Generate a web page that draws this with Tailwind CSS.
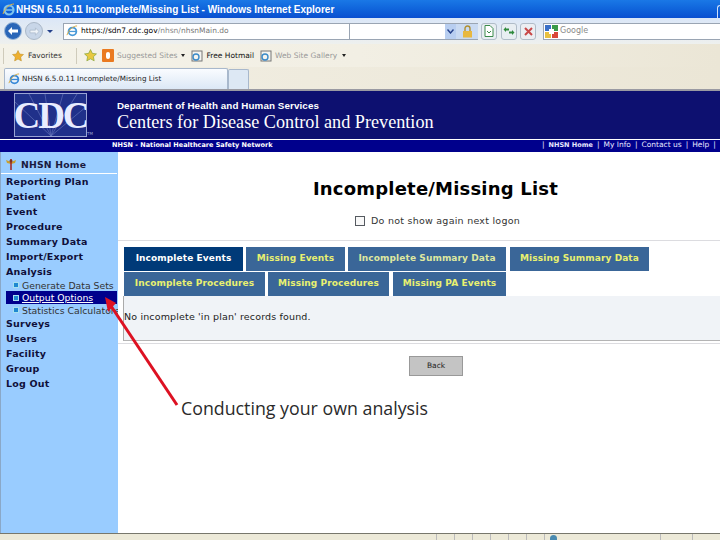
<!DOCTYPE html>
<html><head><meta charset="utf-8"><script src="https://cdn.jsdelivr.net/npm/@tailwindcss/browser@4"></script></head>
<body class="m-0">
<div class="relative w-[720px] h-[540px] overflow-hidden bg-white flex flex-col font-['DejaVu_Sans',sans-serif]">
  <!-- title bar -->
  <div class="h-[18px] shrink-0 bg-gradient-to-b from-[#1a78e6] to-[#0a4fd0] flex items-center pl-[2px] gap-[1px]">
    <svg width="13" height="13" viewBox="0 0 13 13"><circle cx="7" cy="7" r="4.500" fill="none" stroke="#7fc4ee" stroke-width="2.200"/><path d="M3 7h8" stroke="#7fc4ee" stroke-width="1.500"/><path d="M1 11C3 5 8 1 12 1" fill="none" stroke="#e0b040" stroke-width="1"/></svg>
    <span class="text-[10px] font-bold font-['Liberation_Sans',sans-serif] text-white whitespace-nowrap">NHSN 6.5.0.11 Incomplete/Missing List - Windows Internet Explorer</span>
    <div class="ml-auto self-end w-[3px] h-[13px] border-l border-t border-[#cfe0fa] rounded-tl-[3px]"></div>
  </div>
  <!-- address row -->
  <div class="h-[26px] shrink-0 flex items-center pl-[4px] bg-gradient-to-b from-[#dbe7f7] to-[#eef0ee]">
    <div class="w-[18px] h-[18px] rounded-full bg-[#2a66b8] border border-[#9db8d8] flex items-center justify-center">
      <svg width="12" height="10" viewBox="0 0 12 10"><path d="M1 5l4-4v2.500h6v3H5V9z" fill="#fff"/></svg>
    </div>
    <div class="w-[18px] h-[18px] ml-[3px] rounded-full bg-[#c8d6e8] border border-[#aab8c8] flex items-center justify-center">
      <svg width="11" height="9" viewBox="0 0 12 10"><path d="M11 5L7 1v2.500H1v3h6V9z" fill="#eef3f8" stroke="#9aabbd" stroke-width=".6"/></svg>
    </div>
    <div class="ml-[4px] w-0 h-0 border-l-[3px] border-r-[3px] border-t-[3px] border-l-transparent border-r-transparent border-t-[#24408a]"></div>
    <div class="ml-[10px] w-[287px] h-[17px] bg-white border border-[#9aa5b3] flex items-center relative pl-[2px]">
      <svg width="12" height="12" viewBox="0 0 13 13"><circle cx="7" cy="7" r="4.200" fill="none" stroke="#4a9ad8" stroke-width="2"/><path d="M3 7h8" stroke="#4a9ad8" stroke-width="1.400"/><path d="M1 11C3 5 8 1 12 1" fill="none" stroke="#d8a838" stroke-width="1"/></svg>
      <span class="ml-[3px] text-[7.500px] text-[#555] whitespace-nowrap"><span class="text-black">https://sdn7.cdc.gov</span><span class="text-[#888]">/nhsn/</span><span class="text-[#777]">nhsnMain.do</span></span>
    </div>
    <div class="w-[128px] h-[17px] bg-white border-y border-[#9aa5b3] flex justify-end">
      <div class="w-[11px] h-full bg-[#b8cef0] flex items-center justify-center"><svg width="7" height="5" viewBox="0 0 7 5"><path d="M.5 .5L3.500 4L6.500 .5" fill="none" stroke="#24408a" stroke-width="1.400"/></svg></div>
      <div class="w-[22px] h-full bg-[#c9daf2] flex items-center justify-center">
        <svg width="11" height="13" viewBox="0 0 11 13"><path d="M3 6V3.500a2.500 2.500 0 015 0V6" fill="none" stroke="#b09030" stroke-width="1.400"/><rect x="1" y="6" width="9" height="6.500" fill="#e8b840"/></svg>
      </div>
    </div>
    <div class="ml-[3px] w-[16px] h-[17px] rounded-[3px] border border-[#b0bcc8] bg-[#e8eef2] flex items-center justify-center">
      <svg width="10" height="12" viewBox="0 0 10 12"><path d="M1 .5h5l3 3v8H1z" fill="#fff" stroke="#3a8a4a"/><path d="M3 6l2 2 2-2" fill="none" stroke="#3a8a4a"/></svg>
    </div>
    <div class="ml-[4px] w-[16px] h-[17px] rounded-[3px] border border-[#b0bcc8] bg-[#e8eef2] flex items-center justify-center">
      <svg width="12" height="10" viewBox="0 0 12 10"><path d="M.5 3.500L3 1v1.500h3v2H3V6zM11.500 6.500L9 4v1.500H6v2h3V9z" fill="#2f8a3c"/></svg>
    </div>
    <div class="ml-[3px] w-[16px] h-[17px] rounded-[3px] border border-[#b0bcc8] bg-[#eceef2] flex items-center justify-center">
      <svg width="9" height="9" viewBox="0 0 9 9"><path d="M1 1l7 7M8 1L1 8" stroke="#c84848" stroke-width="2"/></svg>
    </div>
    <div class="ml-[7px] flex-1 h-[17px] bg-white border border-[#9aa5b3] border-r-0 flex items-center pl-[1px]">
      <svg width="13" height="13" viewBox="0 0 13 13"><rect width="6" height="6" fill="#3a70c8"/><rect x="7" width="6" height="6" fill="#3a9a48"/><rect y="7" width="6" height="6" fill="#e8c040"/><rect x="7" y="7" width="6" height="6" fill="#d84838"/><rect x="4" y="4" width="5" height="5" fill="#fff"/></svg>
      <span class="ml-[2px] text-[8px] text-[#8a8a8a]">Google</span>
    </div>
  </div>
  <!-- favorites row -->
  <div class="h-[23px] shrink-0 bg-gradient-to-r from-[#f4f2e8] via-[#f2efe4] to-[#ebe6d6] flex items-center pl-[3px] text-[7.500px] relative">
    <div class="w-px h-[16px] bg-[#cfcbbb]"></div>
    <svg class="ml-[8px]" width="12" height="12" viewBox="0 0 12 12"><path d="M6 .5l1.700 3.500 3.800.5-2.800 2.600.7 3.800L6 9.100 2.600 10.900l.7-3.800L.5 4.500l3.800-.5z" fill="#eeb030" stroke="#b88820" stroke-width=".5"/></svg>
    <span class="ml-[4px] text-[#333]">Favorites</span>
    <div class="ml-[14px] w-px h-[16px] bg-[#cfcbbb]"></div>
    <svg class="ml-[7px]" width="13" height="13" viewBox="0 0 12 12"><path d="M6 .5l1.700 3.500 3.800.5-2.800 2.600.7 3.800L6 9.100 2.600 10.900l.7-3.800L.5 4.500l3.800-.5z" fill="#e8c840" stroke="#80a030" stroke-width=".6"/></svg>
    <div class="ml-[5px] w-[12px] h-[13px] bg-[#ea7a20] rounded-[1px] flex items-center justify-center"><div class="w-[4px] h-[7px] bg-white rounded-[2px]"></div></div>
    <span class="ml-[3px] text-[#999] whitespace-nowrap">Suggested Sites</span>
    <div class="ml-[4px] w-0 h-0 border-l-[2.500px] border-r-[2.500px] border-t-[3px] border-l-transparent border-r-transparent border-t-[#222]"></div>
    <svg class="ml-[6px]" width="12" height="12" viewBox="0 0 12 12"><rect x="1" y="1" width="10" height="10" fill="#f4f4f0" stroke="#777"/><circle cx="5" cy="7" r="3" fill="none" stroke="#3a8ac8" stroke-width="1.400"/></svg>
    <span class="ml-[3px] text-[#111] whitespace-nowrap">Free Hotmail</span>
    <svg class="ml-[6px]" width="12" height="12" viewBox="0 0 12 12"><rect x="1" y="1" width="10" height="10" fill="#f4f4f0" stroke="#777"/><circle cx="5" cy="7" r="3" fill="none" stroke="#3a8ac8" stroke-width="1.400"/></svg>
    <span class="ml-[3px] text-[#999] whitespace-nowrap">Web Site Gallery</span>
    <div class="ml-[5px] w-0 h-0 border-l-[2.500px] border-r-[2.500px] border-t-[3px] border-l-transparent border-r-transparent border-t-[#222]"></div>
  </div>
  <!-- tab row -->
  <div class="h-[24px] shrink-0 bg-gradient-to-r from-[#f2efe4] to-[#ebe6d6] flex items-end pl-[4px] border-b-2 border-[#9a9aa2]">
    <div class="w-[224px] h-[21px] bg-gradient-to-b from-[#fafcff] to-[#dce8f6] rounded-t-[2px] border border-b-0 border-[#a8b8cc] flex items-center pl-[3px]">
      <svg width="12" height="12" viewBox="0 0 13 13"><circle cx="7" cy="7" r="4.200" fill="none" stroke="#3a8ad8" stroke-width="2"/><path d="M3 7h8" stroke="#3a8ad8" stroke-width="1.400"/><path d="M1 11C3 5 8 1 12 1" fill="none" stroke="#d8a838" stroke-width="1"/></svg>
      <span class="ml-[2px] text-[7.200px] text-[#222] whitespace-nowrap">NHSN 6.5.0.11 Incomplete/Missing List</span>
    </div>
    <div class="w-[21px] h-[20px] bg-[#dde8f4] border border-b-0 border-[#a8b8cc] rounded-t-[2px]"></div>
  </div>
  <!-- CDC header -->
  <div class="h-[49px] shrink-0 bg-[#0d1070] flex items-center pl-[14px] border-b border-white">
    <div class="w-[73px] h-[44px] bg-[#20308a] border border-[#9aa4d4] flex items-center justify-center overflow-hidden relative">
      <svg class="absolute inset-0" width="72" height="42" viewBox="0 0 72 42"><g stroke="#6a78c0" stroke-width=".6"><path d="M36 42L0 8M36 42L14 0M36 42L30 0M36 42L48 0M36 42L62 0M36 42L72 12"/></g></svg>
      <span class="relative font-['Liberation_Serif',serif] font-bold text-[37px] leading-none text-[#e8ecff] tracking-[-2px]">CDC</span>
    </div>
    <span class="self-end mb-[2px] text-[4px] text-[#9aa4d4]">TM</span>
    <div class="ml-[24px] flex flex-col text-white">
      <span class="text-[9.800px] leading-[12px] font-bold font-['Liberation_Sans',sans-serif] tracking-[0.1px] mt-[1px] whitespace-nowrap">Department of Health and Human Services</span>
      <span class="text-[18.200px] leading-[20px] font-['Liberation_Serif',serif] whitespace-nowrap">Centers for Disease Control and Prevention</span>
    </div>
  </div>
  <!-- nav bar -->
  <div class="h-[12px] shrink-0 bg-[#00008c] flex items-start text-[6.500px] text-white font-bold leading-[10px] pl-[112px] overflow-hidden">
    <span class="whitespace-nowrap w-[430px] shrink-0">NHSN - National Healthcare Safety Network</span>
    <span class="flex gap-[4px] font-normal whitespace-nowrap text-[7.500px] text-[#e8e8ff]"><span>|</span><b class="text-[6.500px]">NHSN Home</b><span>|</span><span>My Info</span><span>|</span><span>Contact us</span><span>|</span><span>Help</span><span>|</span></span>
  </div>
  <!-- body -->
  <div class="flex-1 flex min-h-0">
    <aside class="w-[118px] shrink-0 bg-[#99ccff] border-l border-[#8aa8c8] overflow-hidden">
      <div class="h-[22px] mr-[1px] flex items-end pb-[2px] pl-[4px] border-b border-white bg-[#99ccff]">
        <svg width="12" height="13" viewBox="0 0 12 13"><path d="M1 2l5 2 5-2-1 3-4 1-4-1z" fill="#c8a030"/><path d="M6 1v11" stroke="#a02020" stroke-width="1.500"/><circle cx="6" cy="3" r="1.500" fill="#803020"/></svg>
        <span class="ml-[4px] text-[9.300px] leading-[13px] font-bold text-[#1a1a40] tracking-[0.2px] whitespace-nowrap">NHSN Home</span>
      </div>
      <div class="flex flex-col pl-[5px] text-[9.500px] font-bold text-[#10103a] leading-[15px] tracking-[0.2px]">
        <div>Reporting Plan</div><div>Patient</div><div>Event</div><div>Procedure</div><div>Summary Data</div><div>Import/Export</div><div>Analysis</div>
        <div class="-ml-[5px] text-[9.300px] font-normal tracking-[0px] leading-[13px] whitespace-nowrap overflow-hidden">
          <div class="h-[12px] pl-[12px] flex items-center text-[#333]"><span class="w-[6px] h-[6px] bg-[#1e88d0] mr-[3px] shrink-0 border border-[#a8e0f0]"></span>Generate Data Sets</div>
          <div class="h-[13px] pl-[5px] mr-[1px] flex items-center"><div class="w-full h-full flex items-center bg-[#00008c] text-white pl-[7px]"><span class="w-[6px] h-[6px] bg-[#1e88d0] mr-[3px] shrink-0 border border-[#a8e0f0]"></span><span class="underline">Output Options</span></div></div>
          <div class="h-[12px] pl-[12px] flex items-center text-[#333]"><span class="w-[6px] h-[6px] bg-[#1e88d0] mr-[3px] shrink-0 border border-[#a8e0f0]"></span>Statistics Calculators</div>
        </div>
        <div>Surveys</div><div>Users</div><div>Facility</div><div>Group</div><div>Log Out</div>
      </div>
    </aside>
    <main class="flex-1 flex flex-col min-w-0">
      <h1 class="text-center mt-[26px] ml-[33px] text-[18px] leading-[22px] font-bold text-black tracking-[0.2px]">Incomplete/Missing List</h1>
      <div class="mt-[15px] ml-[237px] flex items-center h-[12px]">
        <div class="w-[10px] h-[10px] border border-[#555a60] bg-[#f8f8f8]"></div>
        <span class="ml-[6px] text-[9.500px] text-[#333] tracking-[0.25px] whitespace-nowrap">Do not show again next logon</span>
      </div>
      <div class="mt-[13px] h-px bg-[#dcdce0]"></div>
      <div class="ml-[6px] mt-[6px] flex flex-col gap-px text-[9px] font-bold text-[#e8f070] tracking-[0.1px]">
        <div class="flex gap-[3px]">
          <div class="w-[119px] h-[24px] bg-[#003a78] text-white flex items-center justify-center">Incomplete Events</div>
          <div class="w-[99px] h-[24px] bg-[#3a6698] flex items-center justify-center">Missing Events</div>
          <div class="w-[158px] h-[24px] bg-[#3a6698] flex items-center justify-center text-[#dfe8a0]">Incomplete Summary Data</div>
          <div class="ml-px w-[139px] h-[24px] bg-[#3a6698] flex items-center justify-center">Missing Summary Data</div>
        </div>
        <div class="flex gap-[3px]">
          <div class="w-[141px] h-[24px] bg-[#3a6698] flex items-center justify-center">Incomplete Procedures</div>
          <div class="w-[121px] h-[24px] bg-[#3a6698] flex items-center justify-center">Missing Procedures</div>
          <div class="ml-px w-[113px] h-[24px] bg-[#3a6698] flex items-center justify-center">Missing PA Events</div>
        </div>
      </div>
      <div class="ml-[5px] h-[45px] bg-[#f0f3f7] border-b border-l border-l-[#aaa] border-b-[#b4b4b4] flex items-center text-[9.500px] text-[#222] tracking-[0.15px] pb-[2px]">No incomplete 'in plan' records found.</div>
      <div class="h-[3px] bg-white border-b border-[#dcdce0]"></div>
      <div class="mt-[12px] ml-[291px] w-[54px] h-[20px] bg-[#c4c4c4] border border-[#999] flex items-center justify-center text-[7.500px] text-[#222]">Back</div>
      <div class="mt-[20px] ml-[63px] text-[17.800px] leading-[24px] text-[#2a2a2a] font-['Open_Sans',sans-serif] whitespace-nowrap">Conducting your own analysis</div>
    </main>
  </div>
  <!-- status bar -->
  <div class="h-[7px] shrink-0 bg-[#ece9d8] border-t-[1.500px] border-[#77776c] relative">
    <div class="absolute left-[436px] top-0 w-[109px] h-full flex justify-between"><i class="w-px h-full bg-[#bbb]"></i><i class="w-px h-full bg-[#bbb]"></i><i class="w-px h-full bg-[#bbb]"></i><i class="w-px h-full bg-[#bbb]"></i><i class="w-px h-full bg-[#bbb]"></i><i class="w-px h-full bg-[#bbb]"></i><i class="w-px h-full bg-[#bbb]"></i></div>
    <div class="absolute left-[550px] top-[1px] w-[7px] h-[5px] rounded-t-full bg-[#4a8ab0]"></div>
    <div class="absolute left-[660px] top-0 w-px h-full bg-[#bbb]"></div>
    <div class="absolute left-[692px] top-0 w-px h-full bg-[#bbb]"></div>
  </div>
  <!-- red annotation arrow -->
  <svg class="absolute left-0 top-0 pointer-events-none" width="720" height="540" viewBox="0 0 720 540"><path d="M177 405L111 306" stroke="#dd1122" stroke-width="3" fill="none"/><path d="M105 297L116 303L108 312Z" fill="#dd1122"/></svg>
</div>
</body></html>
